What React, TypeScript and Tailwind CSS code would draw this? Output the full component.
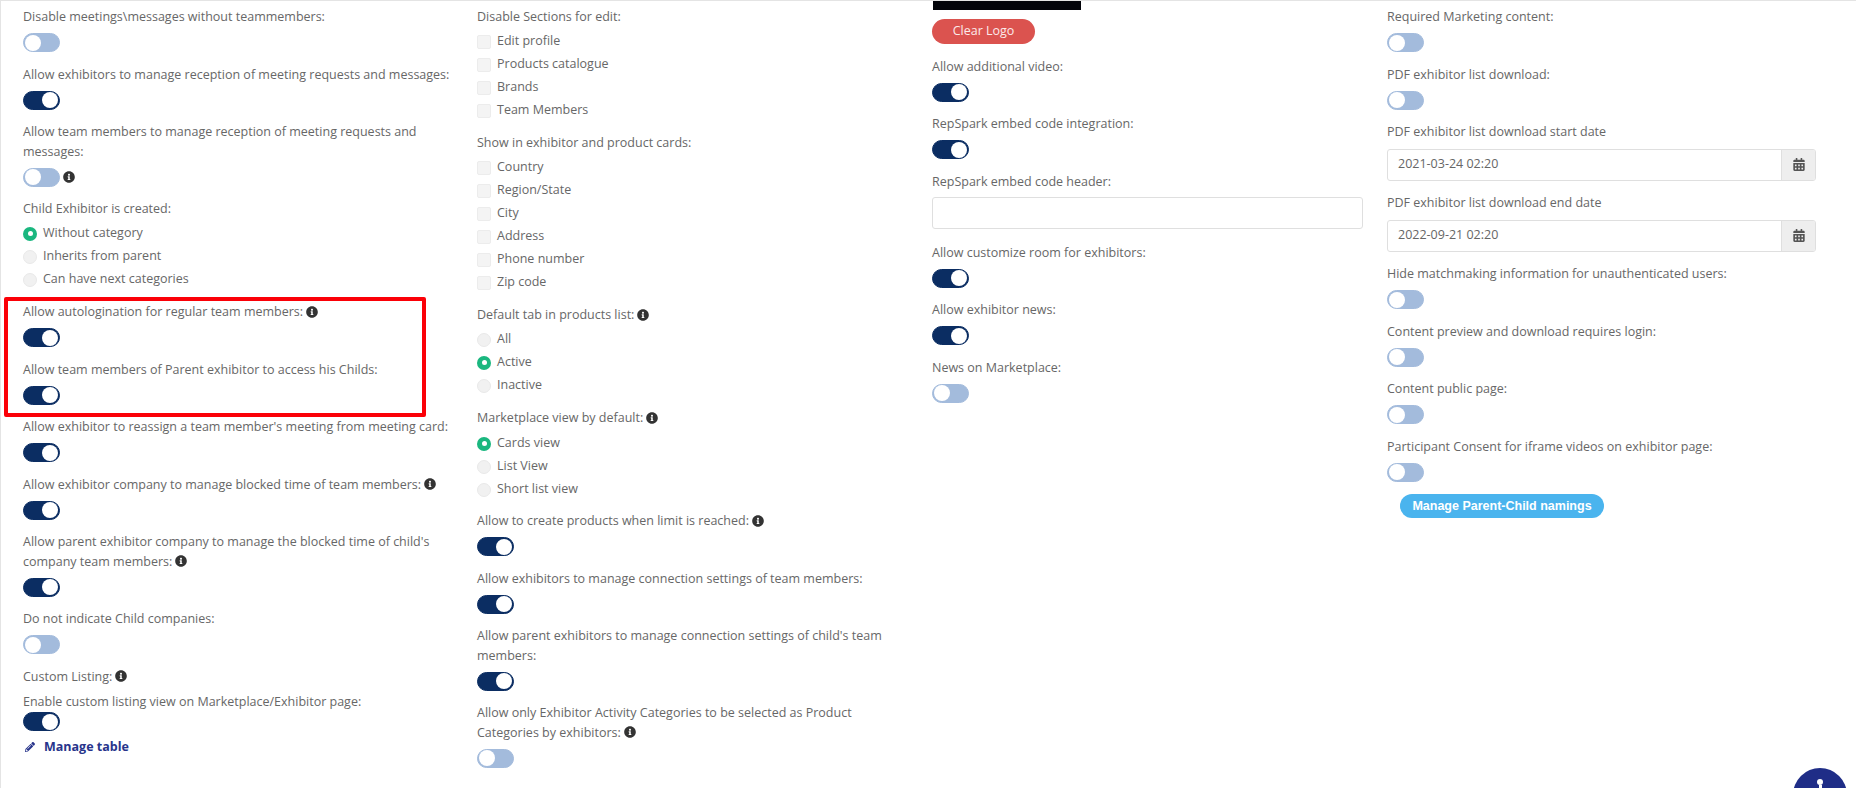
import React from "react";
import { FaInfoCircle, FaPencilAlt, FaCalendarAlt } from "react-icons/fa";

function Info() {
  return <FaInfoCircle className="inline-block w-[12px] h-[12px] ml-[3px] align-[-1.5px] text-[#333333]" />;
}

function Toggle({ on, className = "" }: { on?: boolean; className?: string }) {
  return (
    <div
      className={
        "w-[37px] h-[19px] rounded-full flex items-center border " +
        (on ? "bg-[#0b2d62] border-[#0b2d62] justify-end pr-[1px] " : "bg-[#a3bbdc] border-[#a3bbdc] justify-start pl-[0px] ") +
        className
      }
    >
      <div className={"w-[16px] h-[16px] rounded-full bg-white " + (on ? "" : "ml-[0.5px]")} />
    </div>
  );
}

function Label({ children, className = "" }: { children: React.ReactNode; className?: string }) {
  return <div className={"leading-[19.5px] " + className}>{children}</div>;
}

function Sw({ label, on, info, after }: { label: React.ReactNode; on?: boolean; info?: boolean; after?: boolean }) {
  return (
    <div className="mb-[12.5px]">
      <Label className="mb-[6.5px]">
        {label}
        {info && <Info />}
      </Label>
      <div className="flex items-center">
        <Toggle on={on} />
        {after && <Info />}
      </div>
    </div>
  );
}

function Radio({ on, label }: { on?: boolean; label: string }) {
  return (
    <div className="h-[23px] flex items-center gap-[6px]">
      {on ? (
        <div className="w-[14px] h-[14px] rounded-full bg-[#1ab77f] flex items-center justify-center">
          <div className="w-[5px] h-[5px] rounded-full bg-white" />
        </div>
      ) : (
        <div className="w-[14px] h-[14px] rounded-full bg-[#f1f1f1] border border-[#e9e9e9]" />
      )}
      <span>{label}</span>
    </div>
  );
}

function Check({ label }: { label: string }) {
  return (
    <div className="h-[23px] flex items-center gap-[6px]">
      <div className="w-[14px] h-[14px] rounded-[2px] bg-[#f4f4f4] border border-[#ececec]" />
      <span>{label}</span>
    </div>
  );
}

function Group({ label, info, children }: { label: string; info?: boolean; children: React.ReactNode }) {
  return (
    <div className="mb-[10.75px]">
      <Label className="mb-[3.75px]">
        {label}
        {info && <Info />}
      </Label>
      {children}
    </div>
  );
}

function DateField({ label, value }: { label: string; value: string }) {
  return (
    <div className="mb-[12.5px]">
      <Label className="mb-[7px]">{label}</Label>
      <div className="flex h-[32px] border border-[#dfdfdf] rounded-[3px] overflow-hidden">
        <div className="flex-1 flex items-center pl-[10px] text-[#666666]">{value}</div>
        <div className="w-[34px] bg-[#eeeeee] border-l border-[#dfdfdf] flex items-center justify-center">
          <FaCalendarAlt className="w-[12px] h-[13px] text-[#555555]" />
        </div>
      </div>
    </div>
  );
}

export default function App() {
  return (
    <div className="relative h-[788px] overflow-hidden bg-white border-t border-l border-[#e4e4e4] font-['Open_Sans',sans-serif] text-[12.5px] text-[#676767]">
      <div className="grid grid-cols-[454px_455px_455px_429px] pl-[22px]">
        <div className="pt-[6px] pr-[20px]">
          <Sw label="Disable meetings\messages without teammembers:" />
          <Sw label="Allow exhibitors to manage reception of meeting requests and messages:" on />
          <Sw label="Allow team members to manage reception of meeting requests and messages:" after />
          <Group label="Child Exhibitor is created:">
            <Radio on label="Without category" />
            <Radio label="Inherits from parent" />
            <Radio label="Can have next categories" />
          </Group>
          <Sw label="Allow autologination for regular team members:" on info />
          <Sw label="Allow team members of Parent exhibitor to access his Childs:" on />
          <Sw label="Allow exhibitor to reassign a team member's meeting from meeting card:" on />
          <Sw label="Allow exhibitor company to manage blocked time of team members:" on info />
          <Sw label="Allow parent exhibitor company to manage the blocked time of child's company team members:" on info />
          <Sw label="Do not indicate Child companies:" />
          <Label className="mb-[5.5px]">
            Custom Listing:
            <Info />
          </Label>
          <Label className="mb-[1px]">Enable custom listing view on Marketplace/Exhibitor page:</Label>
          <Toggle on />
          <div className="flex items-center mt-[6px] h-[20px] font-bold text-[#27348b]">
            <FaPencilAlt className="w-[10px] h-[10px] ml-[2px] mr-[9px]" />
            Manage table
          </div>
        </div>

        <div className="pt-[6px] pr-[30px]">
          <Group label="Disable Sections for edit:">
            <Check label="Edit profile" />
            <Check label="Products catalogue" />
            <Check label="Brands" />
            <Check label="Team Members" />
          </Group>
          <Group label="Show in exhibitor and product cards:">
            <Check label="Country" />
            <Check label="Region/State" />
            <Check label="City" />
            <Check label="Address" />
            <Check label="Phone number" />
            <Check label="Zip code" />
          </Group>
          <Group label="Default tab in products list:" info>
            <Radio label="All" />
            <Radio on label="Active" />
            <Radio label="Inactive" />
          </Group>
          <div className="mb-[9.75px]">
            <Label className="mb-[4.75px]">
              Marketplace view by default:
              <Info />
            </Label>
            <Radio on label="Cards view" />
            <Radio label="List View" />
            <Radio label="Short list view" />
          </div>
          <Sw label="Allow to create products when limit is reached:" on info />
          <Sw label="Allow exhibitors to manage connection settings of team members:" on />
          <Sw label="Allow parent exhibitors to manage connection settings of child's team members:" on />
          <Sw label="Allow only Exhibitor Activity Categories to be selected as Product Categories by exhibitors:" info />
        </div>

        <div className="pr-[24px]">
          <div className="w-[148px] h-[9px] bg-[#03040a] ml-[1px]" />
          <div className="mt-[9px] mb-[12.5px] w-[103px] h-[25px] rounded-full bg-[#db534f] text-[#fbeaea] flex items-center justify-center">
            Clear Logo
          </div>
          <Sw label="Allow additional video:" on />
          <Sw label="RepSpark embed code integration:" on />
          <div className="mb-[13.5px]">
            <Label className="mb-[6px]">RepSpark embed code header:</Label>
            <div className="h-[32px] border border-[#dfdfdf] rounded-[3px]" />
          </div>
          <Sw label="Allow customize room for exhibitors:" on />
          <Sw label="Allow exhibitor news:" on />
          <Sw label="News on Marketplace:" />
        </div>

        <div className="pt-[6px]">
          <Sw label="Required Marketing content:" />
          <Sw label="PDF exhibitor list download:" />
          <DateField label="PDF exhibitor list download start date" value="2021-03-24 02:20" />
          <DateField label="PDF exhibitor list download end date" value="2022-09-21 02:20" />
          <Sw label="Hide matchmaking information for unauthenticated users:" />
          <Sw label="Content preview and download requires login:" />
          <Sw label="Content public page:" />
          <Sw label="Participant Consent for iframe videos on exhibitor page:" />
          <div className="ml-[13px] mt-[1px] w-[204px] h-[24px] rounded-full bg-[#4ab4ee] text-white font-bold font-['Liberation_Sans',sans-serif] flex items-center justify-center">
            Manage Parent-Child namings
          </div>
        </div>
      </div>

      <div className="absolute left-[3px] top-[296px] w-[422px] h-[120px] border-[4px] border-[#fb0007] rounded-[2px]" />

      <div className="absolute left-[1792px] top-[767px] w-[54px] h-[54px] rounded-full bg-[#1f2d87] flex flex-col items-center pt-[11px]">
        <div className="w-[6px] h-[6px] rounded-full bg-white" />
        <div className="w-[3px] h-[8px] bg-white" />
      </div>
    </div>
  );
}
